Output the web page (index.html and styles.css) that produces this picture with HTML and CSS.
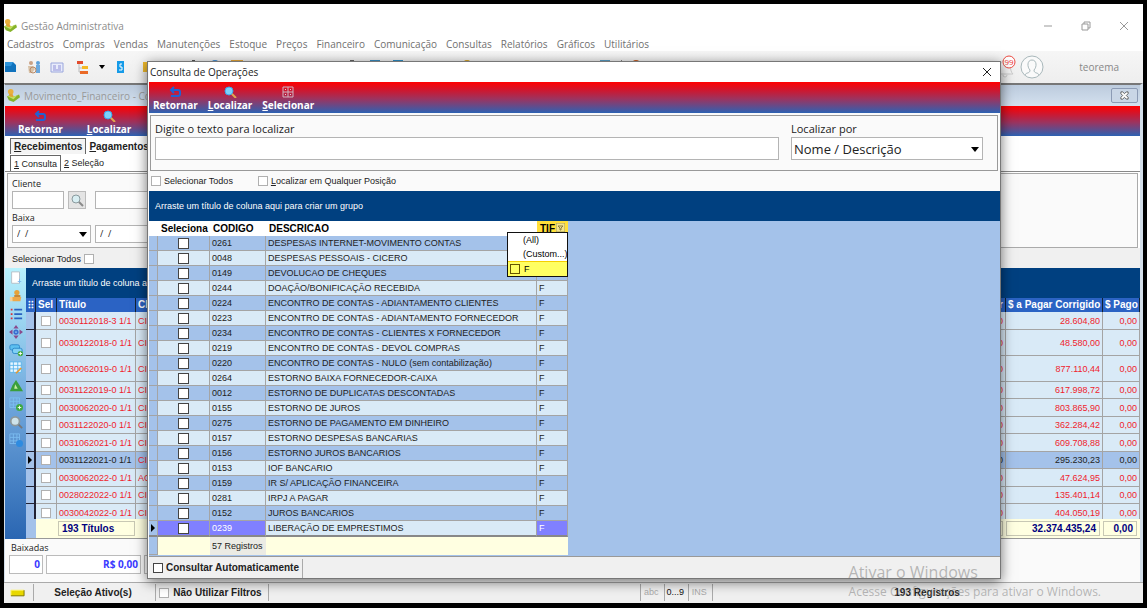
FILE: index.html
```html
<!DOCTYPE html>
<html lang="pt-BR">
<head>
  <meta charset="UTF-8">
  <meta name="viewport" content="width=device-width, initial-scale=1.0">
  <title>Gestão Administrativa</title>
  <link rel="stylesheet" href="styles.css">
</head>
<body>
  <svg class="defs" aria-hidden="true">
    <symbol id="i-logo" viewBox="0 0 14 14">
      <path d="M0 8l4-2 4 2 5-2 1 3-7 5-5-2z" fill="#86b32a"/>
      <path d="M1 8l4-2 3 2 4-2-5 5z" fill="#c3e060"/>
      <circle cx="4" cy="3" r="3" fill="#e8b03c"/>
      <path d="M2 5h4l1 4-4-1z" fill="#e0a435"/>
    </symbol>
    <symbol id="i-back" viewBox="0 0 14 12">
      <path d="M6 1L3 4l3 3M3 4h7a2 2 0 0 1 2 2v2a2 2 0 0 1-2 2H3" fill="none" stroke="#1f62d4" stroke-width="2"/>
    </symbol>
    <symbol id="i-find" viewBox="0 0 14 12">
      <circle cx="6" cy="5" r="4" fill="#7cd2fa" stroke="#3ba5ea"/>
      <path d="M9 8l4 4" stroke="#e0a850" stroke-width="2"/>
    </symbol>
    <symbol id="i-grid" viewBox="0 0 14 12">
      <path d="M2 1h10v10H2zM2 6h10M7 1v10" fill="none" stroke="#d0b4c0"/>
      <path d="M4 3h1v1H4zM9 3h1v1H9zM4 8h1v1H4zM9 8h1v1H9z" fill="#e8d4dc"/>
    </symbol>
  </svg>

  <div class="app">
    <header class="app_title">
      <svg class="logo"><use href="#i-logo"/></svg>
      <p>Gestão Administrativa</p>
      <div class="win_btns">
        <button aria-label="Minimizar"><svg viewBox="0 0 10 10"><path d="M1 5h8"/></svg></button>
        <button aria-label="Restaurar"><svg viewBox="0 0 10 10"><path d="M1 3h6v6H1zM3 3V1h6v6H7"/></svg></button>
        <button aria-label="Fechar"><svg viewBox="0 0 10 10"><path d="M1 1l8 8M9 1L1 9"/></svg></button>
      </div>
    </header>

    <nav class="menu">
      <a href="#">Cadastros</a>
      <a href="#">Compras</a>
      <a href="#">Vendas</a>
      <a href="#">Manutenções</a>
      <a href="#">Estoque</a>
      <a href="#">Preços</a>
      <a href="#">Financeiro</a>
      <a href="#">Comunicação</a>
      <a href="#">Consultas</a>
      <a href="#">Relatórios</a>
      <a href="#">Gráficos</a>
      <a href="#">Utilitários</a>
    </nav>

    <div class="toolbar">
      <div class="tools">
        <svg viewBox="0 0 14 14"><path d="M1 2h8l3 3v7H1z" fill="#1173bd"/><path d="M1 2h8l-2 4H1z" fill="#2d94dc"/></svg>
        <svg viewBox="0 0 14 14"><circle cx="4" cy="3" r="2" fill="#c9a184"/><circle cx="11" cy="3" r="2" fill="#5b9fd8"/><path d="M9 5h4v8H9z" fill="#6aa8de"/><path d="M1 6h5l2 3-3 4H2z" fill="#d8c2a8"/><circle cx="6" cy="10" r="3" fill="none" stroke="#b98a68"/></svg>
        <svg viewBox="0 0 14 14"><path d="M1 3h12v9H1z" fill="#e8ecfb" stroke="#9aa6dc"/><path d="M3 6h3M3 8h3M8 6h3M8 8h3M3 10h8" stroke="#8f8fd8"/></svg>
      </div>
      <div class="tools tools_b">
        <svg viewBox="0 0 14 14"><path d="M1 1h6v3H1z" fill="#e24b2c"/><path d="M6 6h6v3H6z" fill="#f5b922"/><path d="M4 11h8v3H4z" fill="#ea6a26"/><path d="M3 4v8h1M3 8h3" fill="none" stroke="#bbb"/></svg>
        <svg class="caret" viewBox="0 0 6 4"><path d="M0 0h6L3 4z"/></svg>
        <svg viewBox="0 0 14 14"><path d="M3 1h7v12H3z" fill="#169be8"/><path d="M8 4H6v3h2v3H5" fill="none" stroke="#fff"/></svg>
      </div>
      <div class="tools tools_c">
        <svg viewBox="0 0 14 14"><path d="M1 2h7v10H1z" fill="#edb82c"/></svg>
        <svg viewBox="0 0 14 14"></svg>
        <svg viewBox="0 0 14 14"><path d="M6 0h3v4H6z" fill="#555"/></svg>
        <svg viewBox="0 0 14 14"><circle cx="7" cy="5" r="5" fill="#3f8fd8"/></svg>
        <svg viewBox="0 0 14 14"><path d="M1 0h12v10H1z" fill="#e9a93a"/></svg>
      </div>
      <div class="tools tools_d">
        <svg viewBox="0 0 14 14"><path d="M5 0h4v5H5z" fill="#666"/></svg>
        <svg viewBox="0 0 14 14"><path d="M2 0h10v10H2z" fill="#3b90c4"/></svg>
        <svg viewBox="0 0 14 14"><path d="M2 0h10v10H2z" fill="#2f8fc8"/></svg>
        <svg viewBox="0 0 14 14"><path d="M2 1h10v10H2z" fill="#c08a70"/></svg>
        <svg viewBox="0 0 14 14"><path d="M2 1h10v10H2z" fill="#c98c78"/></svg>
        <svg viewBox="0 0 14 14"><circle cx="7" cy="5" r="5" fill="#d9a21c"/></svg>
        <svg viewBox="0 0 14 14"><path d="M4 1h6v10H4z" fill="#3b90c4"/></svg>
      </div>
      <div class="tools tools_e">
        <svg viewBox="0 0 14 14"><path d="M2 0h10v10H2z" fill="#5aa0c8"/></svg>
        <i class="tool_line"></i>
        <svg viewBox="0 0 14 14"><circle cx="5" cy="4" r="4" fill="#c85a1c"/></svg>
      </div>
      <div class="user">
        <svg class="bell" viewBox="0 0 20 24"><path d="M1 19c4-3 1-13 8-14 7 1 4 11 8 14zM7 20a2 2 0 0 0 4 0" fill="#f4f4f4" stroke="#ccc"/><circle cx="13" cy="7" r="6" fill="#fff" stroke="#ee4a40"/><text x="13" y="10" text-anchor="middle">99</text></svg>
        <svg class="avatar" viewBox="0 0 24 24"><circle cx="12" cy="12" r="11" fill="#fafafa" stroke="#a9b8bb"/><path d="M5 20c1-3 5-1 5-5-3-3-3-10 2-10s5 7 2 10c0 4 4 2 5 5" fill="none" stroke="#a9b8bb"/></svg>
        <span>teorema</span>
      </div>
    </div>

    <main class="child">
      <div class="child_title">
        <svg class="logo"><use href="#i-logo"/></svg>
        <p>Movimento_Financeiro - Consulta</p>
        <button class="child_close" aria-label="Fechar janela"><svg viewBox="0 0 10 10"><path d="M1 1h2l2 2 2-2h2v2L7 5l2 2v2H7L5 7 3 9H1V7l2-2-2-2z"/></svg></button>
      </div>
      <div class="actions actions_child">
        <button><svg><use href="#i-back"/></svg>Retornar</button>
        <button><svg><use href="#i-find"/></svg><span><u>L</u>ocalizar</span></button>
      </div>

      <div class="tabs tabs_main">
        <button class="on"><u>R</u>ecebimentos</button>
        <button><u>P</u>agamentos</button>
      </div>
      <div class="tabs tabs_sub">
        <button class="on"><u>1</u> Consulta</button>
        <button><u>2</u> Seleção</button>
      </div>

      <form class="filter">
        <label for="cliente">Cliente</label>
        <div class="filter_row">
          <input type="text" id="cliente" class="f_code">
          <button type="button" class="f_find" aria-label="Buscar cliente"><svg viewBox="0 0 14 14"><circle cx="6" cy="6" r="4" fill="#d8eef2" stroke="#8a9a9e"/><path d="M9 9l4 4" stroke="#8a8a8a" stroke-width="2"/></svg></button>
          <input type="text" class="f_name" aria-label="Nome do cliente">
        </div>
        <label for="baixa">Baixa</label>
        <div class="filter_row">
          <span class="combo"><select id="baixa"><option>/ &nbsp;/</option></select></span>
          <span class="combo"><select aria-label="Baixa final"><option>/ &nbsp;/</option></select></span>
        </div>
      </form>

      <div class="check_all">
        <label for="todos">Selecionar Todos</label>
        <input type="checkbox" id="todos">
      </div>

      <div class="work">
        <div class="side">
          <svg viewBox="0 0 16 16"><path d="M3 1h9v13H3z" fill="#fff" stroke="#b4bcc4"/><path d="M12 9v5M10 12h4" stroke="#7db7ec"/></svg>
          <svg viewBox="0 0 16 16"><circle cx="9" cy="4" r="3" fill="#e6a23a"/><path d="M2 9h12l-1 5H4z" fill="#eda94b"/><path d="M1 9h3v5H1z" fill="#f5d19a"/><path d="M6 7h7v2H6z" fill="#c97b22"/></svg>
          <svg viewBox="0 0 16 16"><path d="M2 3h2M2 8h2M2 13h2" stroke="#d8303a" stroke-width="2"/><path d="M6 3h9M6 8h9M6 13h9" stroke="#2a62c0" stroke-width="2"/></svg>
          <svg viewBox="0 0 16 16"><circle cx="8" cy="8" r="2" fill="none" stroke="#3a6cd0" stroke-width="2"/><path d="M8 0l3 4H5zM8 16l3-4H5zM0 8l4-3v6zM16 8l-4-3v6z" fill="#8a4a8c"/></svg>
          <svg viewBox="0 0 16 16"><rect x="1" y="2" width="11" height="6" rx="2" fill="#5cc0f0" stroke="#2a86c8"/><rect x="4" y="6" width="11" height="6" rx="2" fill="#7fd0f5" stroke="#2a86c8"/><circle cx="13" cy="12" r="3" fill="#41a83c"/><path d="M13 10v4M11 12h4" stroke="#fff"/></svg>
          <svg viewBox="0 0 16 16"><path d="M1 1h13v12H1z" fill="#e7f6ff"/><path d="M1 1h13v12H1zM1 5h13M1 9h13M5 1v12M10 1v12" fill="none" stroke="#58b2ea"/><path d="M8 14l6-6" stroke="#e59a32" stroke-width="2"/></svg>
          <svg viewBox="0 0 16 16"><path d="M8 1l4 6 4 7H1l3-7z" fill="#3a9f3c"/><path d="M7 6l3 5H6z" fill="#c9ee9f"/></svg>
          <svg viewBox="0 0 16 16"><path d="M1 1h11v11H1zM1 5h11M1 9h11M5 1v11M9 1v11" fill="none" stroke="#7cc0f0"/><circle cx="12" cy="12" r="4" fill="#3fa944"/><path d="M12 10v4M10 12h4" stroke="#fff"/></svg>
          <svg viewBox="0 0 16 16"><circle cx="7" cy="7" r="5" fill="#cfe3ea" stroke="#8d989c" stroke-width="2"/><path d="M11 11l4 4" stroke="#777" stroke-width="2"/></svg>
          <svg viewBox="0 0 16 16"><path d="M1 1h11v11H1zM1 5h11M1 9h11M5 1v11M9 1v11" fill="none" stroke="#7cbcf0"/><circle cx="12" cy="12" r="4" fill="#2e8be0"/></svg>
        </div>

        <div class="titles">
          <div class="group_band">Arraste um título de coluna aqui para criar um grupo</div>
          <div class="titles_scroll">
            <table class="titles_table">
              <colgroup><col class="c_ind"><col class="c_sel"><col class="c_tit"><col><col class="c_pagar"><col class="c_corr"><col class="c_pago"></colgroup>
              <thead>
                <tr><th>⁝⁝</th><th>Sel</th><th>Título</th><th>Cliente</th><th class="num">$ Pagar</th><th class="num">$ a Pagar Corrigido</th><th class="num">$ Pago</th></tr>
              </thead>
              <tbody>
                <tr><td class="ind"></td><td><input type="checkbox" aria-label="Título 1"></td><td>0030112018-3 1/1</td><td>CI</td><td class="num">0,00</td><td class="num">28.604,80</td><td class="num">0,00</td></tr>
                <tr class="tall"><td class="ind"></td><td><input type="checkbox" aria-label="Título 2"></td><td>0030122018-0 1/1</td><td>CI</td><td class="num">0,00</td><td class="num">48.580,00</td><td class="num">0,00</td></tr>
                <tr class="tall"><td class="ind"></td><td><input type="checkbox" aria-label="Título 3"></td><td>0030062019-0 1/1</td><td>CI</td><td class="num">0,00</td><td class="num">877.110,44</td><td class="num">0,00</td></tr>
                <tr><td class="ind"></td><td><input type="checkbox" aria-label="Título 4"></td><td>0031122019-0 1/1</td><td>CI</td><td class="num">0,00</td><td class="num">617.998,72</td><td class="num">0,00</td></tr>
                <tr><td class="ind"></td><td><input type="checkbox" aria-label="Título 5"></td><td>0030062020-0 1/1</td><td>CI</td><td class="num">0,00</td><td class="num">803.865,90</td><td class="num">0,00</td></tr>
                <tr><td class="ind"></td><td><input type="checkbox" aria-label="Título 6"></td><td>0031122020-0 1/1</td><td>CI</td><td class="num">0,00</td><td class="num">362.284,42</td><td class="num">0,00</td></tr>
                <tr><td class="ind"></td><td><input type="checkbox" aria-label="Título 7"></td><td>0031062021-0 1/1</td><td>CI</td><td class="num">0,00</td><td class="num">609.708,88</td><td class="num">0,00</td></tr>
                <tr class="current"><td class="ind"><i class="arrow"></i></td><td><input type="checkbox" aria-label="Título 8"></td><td>0031122021-0 1/1</td><td class="red">CI</td><td class="num">0,00</td><td class="num">295.230,23</td><td class="num">0,00</td></tr>
                <tr><td class="ind"></td><td><input type="checkbox" aria-label="Título 9"></td><td>0030062022-0 1/1</td><td>AC</td><td class="num">0,00</td><td class="num">47.624,95</td><td class="num">0,00</td></tr>
                <tr><td class="ind"></td><td><input type="checkbox" aria-label="Título 10"></td><td>0028022022-0 1/1</td><td>CI</td><td class="num">0,00</td><td class="num">135.401,14</td><td class="num">0,00</td></tr>
                <tr><td class="ind"></td><td><input type="checkbox" aria-label="Título 11"></td><td>0030042022-0 1/1</td><td>CI</td><td class="num">0,00</td><td class="num">404.050,19</td><td class="num">0,00</td></tr>
              </tbody>
            </table>
          </div>
          <div class="totals">
            <span class="t_count">193 Títulos</span>
            <span class="t_pagar">0,00</span>
            <span class="t_corr">32.374.435,24</span>
            <span class="t_pago">0,00</span>
          </div>
        </div>
      </div>

      <div class="settled">
        <p>Baixadas</p>
        <div class="settled_row">
          <output class="s_qty">0</output>
          <output class="s_val">R$ 0,00</output>
          <output class="s_qty">0</output>
        </div>
      </div>
    </main>

    <footer class="status">
      <div class="st_icon"><svg viewBox="0 0 16 8"><path d="M1 1h14v6H1z" fill="#e8d800"/><path d="M1 7V1h14" fill="none" stroke="#fff36a"/><path d="M1 7h14V1" fill="none" stroke="#7d7400"/></svg></div>
      <div class="st_sel">Seleção Ativo(s)</div>
      <div class="st_filter"><input type="checkbox" id="filtros"><label for="filtros">Não Utilizar Filtros</label></div>
      <div class="st_free"></div>
      <div class="st_key">abc</div>
      <div class="st_key st_on">0...9</div>
      <div class="st_key">INS</div>
      <div class="st_total">193 Registros</div>
    </footer>
  </div>

  <!-- Janela de consulta -->
  <section class="dialog" role="dialog" aria-labelledby="dlg_title">
    <div class="dialog_title">
      <p id="dlg_title">Consulta de Operações</p>
      <button class="dialog_close" aria-label="Fechar"><svg viewBox="0 0 10 10"><path d="M1 1l8 8M9 1L1 9"/></svg></button>
    </div>
    <div class="actions">
      <button><svg><use href="#i-back"/></svg>Retornar</button>
      <button><svg><use href="#i-find"/></svg><span><u>L</u>ocalizar</span></button>
      <button><svg><use href="#i-grid"/></svg><span><u>S</u>elecionar</span></button>
    </div>
    <form class="search">
      <div class="search_text">
        <label for="texto">Digite o texto para localizar</label>
        <input type="text" id="texto">
      </div>
      <div class="search_by">
        <label for="por">Localizar por</label>
        <span class="combo"><select id="por"><option>Nome / Descrição</option></select></span>
      </div>
    </form>
    <div class="options">
      <label><input type="checkbox">Selecionar Todos</label>
      <label><input type="checkbox"><span><u>L</u>ocalizar em Qualquer Posição</span></label>
    </div>
    <div class="group_band">Arraste um título de coluna aqui para criar um grupo</div>
    <div class="ops">
      <table class="ops_table">
        <colgroup><col class="o_ind"><col class="o_sel"><col class="o_cod"><col class="o_desc"><col class="o_tip"></colgroup>
        <thead>
          <tr>
            <th></th><th>Seleciona</th><th>CODIGO</th><th>DESCRICAO</th>
            <th class="filtered">TIF<svg class="drop" viewBox="0 0 9 9"><path d="M0 0h9v9H0z" fill="#f4e58a" stroke="#a89a50"/><path d="M2 3h5L5 5v2H4V5z" fill="none" stroke="#8a7d40"/></svg>
              <div class="popup">
                <button>(All)</button>
                <button>(Custom...)</button>
                <label class="on"><input type="checkbox">F</label>
              </div>
            </th>
          </tr>
        </thead>
        <tbody>
          <tr><td></td><td><input type="checkbox" aria-label="0261"></td><td>0261</td><td>DESPESAS INTERNET-MOVIMENTO CONTAS</td><td>F</td></tr>
          <tr><td></td><td><input type="checkbox" aria-label="0048"></td><td>0048</td><td>DESPESAS PESSOAIS - CICERO</td><td>F</td></tr>
          <tr><td></td><td><input type="checkbox" aria-label="0149"></td><td>0149</td><td>DEVOLUCAO DE CHEQUES</td><td>F</td></tr>
          <tr><td></td><td><input type="checkbox" aria-label="0244"></td><td>0244</td><td>DOAÇÃO/BONIFICAÇÃO RECEBIDA</td><td>F</td></tr>
          <tr><td></td><td><input type="checkbox" aria-label="0224"></td><td>0224</td><td>ENCONTRO DE CONTAS - ADIANTAMENTO CLIENTES</td><td>F</td></tr>
          <tr><td></td><td><input type="checkbox" aria-label="0223"></td><td>0223</td><td>ENCONTRO DE CONTAS - ADIANTAMENTO FORNECEDOR</td><td>F</td></tr>
          <tr><td></td><td><input type="checkbox" aria-label="0234"></td><td>0234</td><td>ENCONTRO DE CONTAS - CLIENTES X FORNECEDOR</td><td>F</td></tr>
          <tr><td></td><td><input type="checkbox" aria-label="0219"></td><td>0219</td><td>ENCONTRO DE CONTAS - DEVOL COMPRAS</td><td>F</td></tr>
          <tr><td></td><td><input type="checkbox" aria-label="0220"></td><td>0220</td><td>ENCONTRO DE CONTAS - NULO (sem contabilização)</td><td>F</td></tr>
          <tr><td></td><td><input type="checkbox" aria-label="0264"></td><td>0264</td><td>ESTORNO BAIXA FORNECEDOR-CAIXA</td><td>F</td></tr>
          <tr><td></td><td><input type="checkbox" aria-label="0012"></td><td>0012</td><td>ESTORNO DE DUPLICATAS DESCONTADAS</td><td>F</td></tr>
          <tr><td></td><td><input type="checkbox" aria-label="0155"></td><td>0155</td><td>ESTORNO DE JUROS</td><td>F</td></tr>
          <tr><td></td><td><input type="checkbox" aria-label="0275"></td><td>0275</td><td>ESTORNO DE PAGAMENTO EM DINHEIRO</td><td>F</td></tr>
          <tr><td></td><td><input type="checkbox" aria-label="0157"></td><td>0157</td><td>ESTORNO DESPESAS BANCARIAS</td><td>F</td></tr>
          <tr><td></td><td><input type="checkbox" aria-label="0156"></td><td>0156</td><td>ESTORNO JUROS BANCARIOS</td><td>F</td></tr>
          <tr><td></td><td><input type="checkbox" aria-label="0153"></td><td>0153</td><td>IOF BANCARIO</td><td>F</td></tr>
          <tr><td></td><td><input type="checkbox" aria-label="0159"></td><td>0159</td><td>IR S/ APLICAÇÃO FINANCEIRA</td><td>F</td></tr>
          <tr><td></td><td><input type="checkbox" aria-label="0281"></td><td>0281</td><td>IRPJ A PAGAR</td><td>F</td></tr>
          <tr><td></td><td><input type="checkbox" aria-label="0152"></td><td>0152</td><td>JUROS BANCARIOS</td><td>F</td></tr>
          <tr class="picked"><td><i class="arrow"></i></td><td><input type="checkbox" aria-label="0239"></td><td>0239</td><td>LIBERAÇÃO DE EMPRESTIMOS</td><td>F</td></tr>
        </tbody>
        <tfoot>
          <tr><td></td><td></td><td class="count">57 Registros</td><td></td><td></td></tr>
        </tfoot>
      </table>
    </div>
    <div class="dialog_status">
      <label><input type="checkbox">Consultar Automaticamente</label>
      <div></div>
    </div>
  </section>

  <div class="watermark">
    <p class="wm_big">Ativar o Windows</p>
    <p class="wm_small">Acesse Configurações para ativar o Windows.</p>
  </div>
</body>
</html>
```

FILE: styles.css
```css
* {
  margin: 0;
  padding: 0;
  box-sizing: border-box;
}
body {
  position: relative;
  height: 100vh;
  overflow: hidden;
  border: 4px solid #000;
  border-bottom-width: 5px;
  background: #fff;
  font-family: "Open Sans", "Noto Sans", sans-serif;
  font-size: 10px;
  color: #222;
}
button {
  border: none;
  background: none;
  font: inherit;
  color: inherit;
}
input, select {
  border: 1px solid #b4b4b4;
  border-radius: 0;
  background: #fff;
  font: inherit;
  color: inherit;
}
input[type="checkbox"] {
  appearance: none;
  flex: none;
  display: block;
  width: 10px;
  height: 10px;
  border: 1px solid #b0b0b0;
}
.defs {
  position: absolute;
  width: 0;
  height: 0;
}
.app {
  display: flex;
  flex-direction: column;
  height: 100%;
}

/* titulo e menu */
.app_title {
  display: flex;
  align-items: center;
  gap: 4px;
  height: 33px;
  padding-top: 10px;
  color: #8c8c8c;
}
.logo {
  flex: none;
  width: 13px;
  height: 13px;
}
.win_btns {
  display: flex;
  gap: 28px;
  margin-left: auto;
  padding-right: 14px;
}
.win_btns svg {
  display: block;
  width: 10px;
  height: 10px;
  fill: none;
  stroke: #999;
}
.menu {
  display: flex;
  gap: 9px;
  height: 14px;
  padding-left: 3px;
  line-height: 14px;
}
.menu a {
  color: #707070;
  text-decoration: none;
}

/* barra de ferramentas */
.toolbar {
  display: flex;
  align-items: center;
  height: 32px;
  background: linear-gradient(#f6f6f6, #eee);
}
.tools {
  display: flex;
  align-items: center;
  gap: 9px;
}
.tools svg {
  width: 14px;
  height: 14px;
}
.tools .caret {
  width: 6px;
  height: 4px;
}
.tools_b {
  padding-left: 12px;
}
.tools_c {
  gap: 8px;
  padding-left: 14px;
}
.tools_d {
  padding-left: 101px;
}
.tools_e {
  padding-left: 101px;
}
.tool_line {
  width: 1px;
  height: 14px;
  background: #888;
}
.user {
  display: flex;
  align-items: center;
  gap: 4px;
  margin-left: auto;
  padding-right: 24px;
  color: #888;
}
.user span {
  padding-left: 31px;
}
.bell {
  width: 20px;
  height: 24px;
}
.bell text {
  font-size: 8px;
  fill: #e33;
}
.avatar {
  width: 24px;
  height: 24px;
}

/* janela interna */
.child {
  display: flex;
  flex: 1;
  flex-direction: column;
  min-height: 0;
  border-top: 2px solid #777;
  border-right: 3px solid #d4dfea;
  border-left: 1px solid #d4dfea;
  background: #fff;
}
.child_title {
  display: flex;
  align-items: center;
  gap: 4px;
  height: 21px;
  padding: 0 2px;
  background: linear-gradient(#bccbdd, #d4e1ef);
  color: #999;
}
.child_close {
  width: 27px;
  height: 15px;
  margin-left: auto;
  border: 1px solid #8c9bb5;
  border-radius: 2px;
  background: #c9d6e6;
}
.child_close svg {
  display: block;
  width: 9px;
  height: 9px;
  margin: auto;
  fill: #fff;
  stroke: #555;
}
.actions {
  display: flex;
  gap: 10px;
  height: 31px;
  padding: 4px 4px 0;
  background: linear-gradient(#f00, #c81a35 30%, #9b3460 55%, #2d62b3);
  color: #fff;
  font-weight: bold;
}
.actions button {
  display: flex;
  flex-direction: column;
  align-items: center;
  min-width: 44px;
  line-height: 14px;
}
.actions svg {
  width: 14px;
  height: 12px;
}
.actions_child {
  gap: 24px;
  height: 30px;
  padding-left: 13px;
}
.tabs {
  display: flex;
  align-items: flex-end;
  padding-left: 5px;
  border-bottom: 1px solid #888;
  font-family: "Liberation Sans", sans-serif;
}
.tabs button {
  height: 16px;
  padding: 0 3px;
}
.tabs .on {
  border: 1px solid #666;
  border-bottom: none;
}
.tabs_main {
  height: 18px;
  border-bottom: none;
  font-weight: bold;
}
.tabs_main .on {
  background: #f4f4f4;
}
.tabs_sub {
  height: 18px;
  font-size: 9px;
}
.filter {
  display: flex;
  flex-direction: column;
  height: 75px;
  margin: 1px 2px 0;
  padding: 3px 4px;
  border: 1px solid #aaa;
  background: #fafafa;
  font-size: 9px;
}
.filter label {
  line-height: 14px;
}
.filter_row {
  display: flex;
  gap: 4px;
  height: 20px;
}
.filter_row input, .filter_row .f_find {
  height: 18px;
}
.f_code {
  width: 52px;
}
.f_find {
  width: 18px;
  border: 1px solid #bbb;
  background: #e4e4e4;
}
.f_find svg {
  display: block;
  width: 14px;
  height: 14px;
  margin: auto;
}
.f_name {
  flex: 1;
  max-width: 400px;
  margin-left: 5px;
}
.combo {
  position: relative;
  display: block;
  width: 79px;
  height: 18px;
}
.combo::after {
  content: "";
  position: absolute;
  top: 50%;
  right: 4px;
  margin-top: -2px;
  border: 4px solid transparent;
  border-top: 5px solid #000;
  border-bottom: none;
  pointer-events: none;
}
.combo select {
  appearance: none;
  width: 100%;
  height: 100%;
  padding: 0 4px;
}
.check_all {
  display: flex;
  align-items: center;
  gap: 3px;
  height: 20px;
  padding: 2px 0 0 7px;
  background: #f0f0f0;
  font-family: "Liberation Sans", sans-serif;
  font-size: 9px;
}

/* grade de titulos */
.work {
  display: flex;
  flex: 1;
  min-height: 0;
}
.side {
  display: flex;
  flex: none;
  flex-direction: column;
  align-items: center;
  gap: 4px;
  width: 21px;
  padding-top: 3px;
  background: linear-gradient(#b8f2fd, #6fa6dc 50%, #2a66b2);
}
.side svg {
  width: 14px;
  height: 14px;
}
.titles {
  display: flex;
  flex: 1;
  flex-direction: column;
  min-width: 0;
  font-family: "Liberation Sans", sans-serif;
  font-size: 9px;
}
.group_band {
  flex: none;
  height: 30px;
  padding-left: 6px;
  background: #004080;
  color: #fff;
  font-family: "Liberation Sans", sans-serif;
  font-size: 9px;
  line-height: 30px;
}
.titles_scroll {
  flex: 1;
  min-height: 0;
  overflow: hidden;
}
table {
  border-collapse: separate;
  border-spacing: 0;
  table-layout: fixed;
}
.titles_table {
  width: 100%;
}
.titles_table .c_ind { width: 10px; }
.titles_table .c_sel { width: 21px; }
.titles_table .c_tit { width: 79px; }
.titles_table .c_pagar { width: 80px; }
.titles_table .c_corr { width: 97px; }
.titles_table .c_pago { width: 37px; }
.titles_table th {
  height: 14px;
  border-right: 1px solid #123;
  background: #2b63c4;
  color: #fff;
  font-size: 10px;
  line-height: 14px;
  text-align: left;
  white-space: nowrap;
  overflow: hidden;
  padding-left: 2px;
}
.titles_table td {
  height: 18px;
  padding: 0 2px;
  border-right: 1px solid #a4a4a4;
  border-bottom: 1px solid #a4a4a4;
  background: #d9eaf7;
  color: #f01c2c;
  white-space: nowrap;
}
.titles_table tr:nth-child(even) td {
  height: 17px;
}
.titles_table .tall td, .titles_table .tall:nth-child(even) td {
  height: 26px;
}
.titles_table td input {
  margin: auto;
}
.titles_table .num {
  text-align: right;
}
.titles_table th.num {
  padding-right: 2px;
}
.titles_table td.ind {
  padding: 0;
  border-right: 2px solid #223;
  border-bottom-color: #223;
  background: #a4c2ea;
}
.titles_table .current td {
  background: #a4c2ea;
  color: #222;
}
.titles_table .current .red {
  color: #f01c2c;
}
.arrow {
  display: block;
  width: 0;
  margin: auto;
  border: 4px solid transparent;
  border-left: 4px solid #000;
  border-right: none;
}
.totals {
  display: flex;
  gap: 3px;
  height: 20px;
  padding: 2px 3px 2px 32px;
  border-bottom: 1px solid #999;
  background: linear-gradient(to right, #a4c2ea 10px, #ffffe1 10px);
  color: #000080;
  font-size: 10px;
  font-weight: bold;
}
.totals span {
  padding: 0 3px;
  border: 1px solid #c8c8b4;
  line-height: 14px;
  text-align: right;
}
.totals .t_count {
  width: 77px;
  text-align: left;
}
.totals .t_pagar {
  width: 80px;
  margin-left: auto;
}
.totals .t_corr {
  width: 94px;
}
.totals .t_pago {
  width: 34px;
}
.settled {
  height: 43px;
  padding: 1px 4px;
  background: #fafafa;
  font-size: 9px;
}
.settled p {
  padding-left: 2px;
  line-height: 15px;
}
.settled_row {
  display: flex;
  gap: 3px;
}
.settled output {
  height: 19px;
  padding: 0 2px;
  border: 1px solid #bbb;
  background: #fff;
  color: #3a3aff;
  font-size: 10px;
  font-weight: bold;
  line-height: 17px;
  text-align: right;
}
.s_qty {
  width: 34px;
}
.s_val {
  width: 95px;
}

/* barra de status */
.status {
  display: flex;
  gap: 3px;
  height: 21px;
  padding: 1px 2px 2px 1px;
  border-top: 1px solid #aaa;
  background: #f0f0f0;
  font-family: "Liberation Sans", sans-serif;
  font-weight: bold;
  line-height: 17px;
}
.status > div {
  display: flex;
  align-items: center;
  justify-content: center;
  border-left: 1px solid #aaa;
}
.status .st_icon {
  width: 25px;
  border: none;
}
.st_icon svg {
  width: 15px;
  height: 8px;
}
.st_sel {
  width: 119px;
}
.st_filter {
  gap: 4px;
  width: 110px;
}
.st_free {
  flex: 370;
}
.st_key {
  width: 21px;
  color: #aaa;
  font-size: 9px;
  font-weight: normal;
}
.status .st_on {
  color: #111;
}
.st_total {
  flex: 430;
}

/* janela de consulta */
.dialog {
  position: absolute;
  top: 57px;
  right: 142px;
  bottom: 24px;
  left: 143px;
  display: flex;
  flex-direction: column;
  padding-left: 1px;
  border: 1px solid #777;
  background: #fafafa;
  box-shadow: 0 3px 12px rgba(0, 0, 0, .55);
}
.dialog_title {
  display: flex;
  align-items: center;
  justify-content: space-between;
  height: 20px;
  padding: 0 8px 0 1px;
  background: #fff;
}
.dialog_close svg {
  display: block;
  width: 10px;
  height: 10px;
  stroke: #222;
}
.search {
  display: flex;
  gap: 12px;
  height: 56px;
  margin: 2px 2px 0 1px;
  padding: 5px 14px 0 4px;
  border: 1px solid #999;
}
.search label {
  display: block;
  font-size: 11px;
  line-height: 15px;
}
.search_text {
  flex: 1;
}
.search_text input {
  display: block;
  width: 100%;
  height: 23px;
  margin-top: 1px;
}
.search_by .combo {
  width: 192px;
  height: 23px;
  margin-top: 1px;
  font-size: 13px;
}
.search_by select {
  padding: 0 2px;
}
.options {
  display: flex;
  align-items: center;
  gap: 25px;
  height: 20px;
  padding-left: 2px;
  font-family: "Liberation Sans", sans-serif;
  font-size: 9px;
}
.options label {
  display: flex;
  gap: 3px;
  line-height: 10px;
}
.ops {
  flex: 1;
  min-height: 0;
  background: #a4c2ea;
}
.ops_table {
  width: 419px;
  font-family: "Liberation Sans", sans-serif;
  font-size: 9px;
}
.ops_table .o_ind { width: 9px; }
.ops_table .o_sel { width: 52px; }
.ops_table .o_cod { width: 56px; }
.ops_table .o_desc { width: 271px; }
.ops_table .o_tip { width: 31px; }
.ops_table th {
  height: 15px;
  padding-left: 3px;
  background: #fff;
  color: #000;
  font-size: 10px;
  line-height: 15px;
  text-align: left;
  white-space: nowrap;
}
.ops_table .filtered {
  position: relative;
  background: #ffdf3a;
}
.drop {
  width: 9px;
  height: 9px;
  margin-left: 1px;
}
.popup {
  position: absolute;
  top: 11px;
  right: 0;
  display: flex;
  flex-direction: column;
  width: 61px;
  border: 1px solid #111;
  background: #fff;
  font-size: 9px;
  font-weight: normal;
}
.popup button, .popup label {
  height: 14px;
  padding-left: 15px;
  line-height: 14px;
  text-align: left;
}
.popup .on {
  display: flex;
  align-items: center;
  gap: 4px;
  height: 15px;
  padding-left: 2px;
  background: #ffff62;
  border-top: 1px solid #f5d000;
}
.popup .on input {
  border-color: #665500;
  background: none;
}
.ops_table td {
  height: 15px;
  padding: 0 2px;
  border-right: 1px solid #a4a4a4;
  border-bottom: 1px solid #a4a4a4;
  background: #d9eaf7;
  line-height: 14px;
  white-space: nowrap;
}
.ops_table tr:nth-child(odd) td, .ops_table tbody td:first-child {
  background: #a4c2ea;
}
.ops_table td:first-child {
  padding: 0;
}
.ops_table td input {
  width: 11px;
  height: 11px;
  margin: auto;
  border-color: #444;
}
.ops_table .picked td:not(:first-child):not(:nth-child(4)) {
  background: #8080ff;
  color: #fff;
}
.ops_table .picked td {
  border-bottom: 2px solid #888;
}
.ops_table tfoot tr td:not(:first-child) {
  height: 18px;
  border: none;
  background: #ffffe1;
}
.ops_table tfoot tr td.count:not(:first-child) {
  background: #ebebe4;
}
.dialog_status {
  display: flex;
  height: 22px;
  border-top: 1px solid #999;
  background: #f0f0f0;
  font-family: "Liberation Sans", sans-serif;
  font-weight: bold;
}
.dialog_status label {
  display: flex;
  align-items: center;
  gap: 3px;
  width: 153px;
  padding-left: 4px;
}
.dialog_status input {
  border-color: #444;
}
.dialog_status div {
  flex: 1;
  margin-top: 2px;
  border-left: 1px solid #aaa;
}

.watermark {
  position: absolute;
  right: 42px;
  bottom: 2px;
  color: rgba(130, 130, 130, .55);
  pointer-events: none;
}
.wm_big {
  font-size: 16px;
  line-height: 22px;
}
.wm_small {
  font-size: 12px;
  line-height: 18px;
}
```
